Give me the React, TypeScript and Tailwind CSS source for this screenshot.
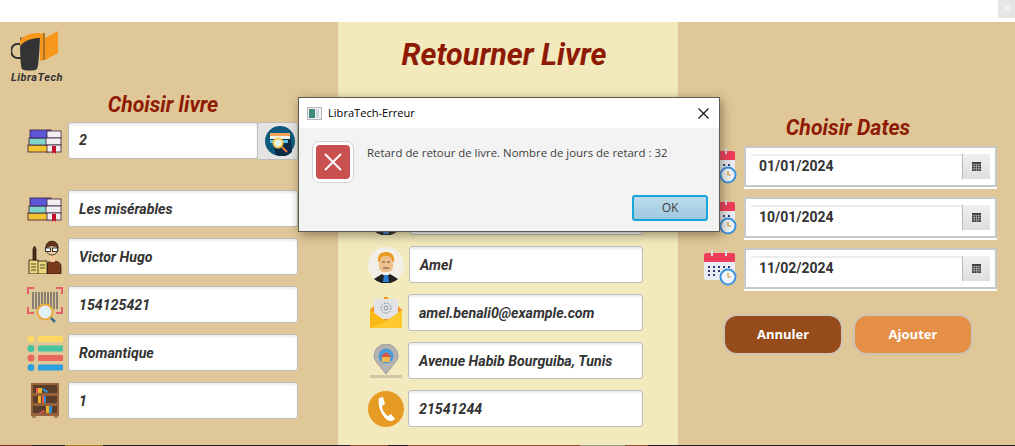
import { ReactNode } from "react";

const roboto = "font-['Roboto',sans-serif]";

const Books = () => (
  <svg viewBox="0 0 36 26" className="w-[36px] h-[26px]">
    <rect x="1" y="17" width="21" height="7" fill="#f4c430" stroke="#3b1d3f" strokeWidth="0.800" />
    <rect x="2" y="10" width="19" height="7" fill="#7fd6c8" stroke="#3b1d3f" strokeWidth="0.800" />
    <rect x="3" y="2" width="21" height="8" fill="#5b57d6" stroke="#3b1d3f" strokeWidth="0.800" />
    <rect x="20" y="3" width="14" height="7" fill="#f1eef0" stroke="#3b1d3f" strokeWidth="0.800" />
    <rect x="19" y="10" width="15" height="7" fill="#f1eef0" stroke="#3b1d3f" strokeWidth="0.800" />
    <rect x="20" y="17" width="14" height="7" fill="#f1eef0" stroke="#3b1d3f" strokeWidth="0.800" />
    <path d="M25 18h4v8l-2-2-2 2z" fill="#c8102e" />
  </svg>
);

const Author = () => (
  <svg viewBox="0 0 34 34" className="w-[34px] h-[34px]">
    <path d="M19 34v-9c0-3 3-4 6-4s8 1 8 5v8z" fill="#7a3a1c" stroke="#111" strokeWidth="0.700" />
    <path d="M22 16h5v6h-5z" fill="#f3c9a0" />
    <circle cx="24" cy="9" r="6" fill="#f3c9a0" stroke="#111" strokeWidth="0.700" />
    <path d="M18 8c-1-9 13-9 12 0-3-3-8-3-12 0z" fill="#6b3417" stroke="#111" strokeWidth="0.700" />
    <rect x="17.500" y="8" width="5" height="3.500" fill="#fff" stroke="#111" strokeWidth="0.800" />
    <rect x="24.500" y="8" width="5" height="3.500" fill="#fff" stroke="#111" strokeWidth="0.800" />
    <path d="M1 34V20h9v1h9v13z" fill="#ecd57a" stroke="#111" strokeWidth="0.800" />
    <path d="M10 21v13M3 24h5M3 27h5M3 30h5M12 25h5M12 28h5" stroke="#111" strokeWidth="0.700" />
    <path d="M5 20V9l1.500-3L8 9v11z" fill="#5b2a14" stroke="#111" strokeWidth="0.700" />
  </svg>
);

const Barcode = () => (
  <svg viewBox="0 0 36 36" className="w-[36px] h-[36px]">
    <path d="M1 7V1h6M29 1h6v6M1 20v6h6M29 26h6v-6" fill="none" stroke="#df6369" strokeWidth="2" />
    <path d="M6 5v17M9 5v17M12 5v17M15 5v17M18 5v17M21 5v17M24 5v17M27 5v17M30 5v17" stroke="#6c6a68" strokeWidth="1.500" />
    <circle cx="18" cy="25" r="7.500" fill="#e3f1f6" stroke="#e9a93c" strokeWidth="2" />
    <path d="M24 31l4 4" stroke="#3d6c93" strokeWidth="2.500" />
  </svg>
);

const Genres = () => (
  <svg viewBox="0 0 36 36" className="w-[36px] h-[36px]">
    {["#fdd761", "#47c39f", "#e8685a", "#2b9fe0"].map((c, i) => (
      <g key={c} fill={c}>
        <circle cx="4" cy={4 + i * 9.500} r="3.500" />
        <rect x="11" y={1 + i * 9.500} width="25" height="6" rx="1" />
      </g>
    ))}
  </svg>
);

const Shelf = () => (
  <svg viewBox="0 0 30 36" className="w-[30px] h-[36px]">
    <rect x="1" y="0" width="28" height="33" fill="#96623c" />
    <rect x="3" y="2" width="24" height="8" fill="#5b3d2a" />
    <rect x="3" y="13" width="24" height="7" fill="#5b3d2a" />
    <rect x="3" y="23" width="24" height="7" fill="#5b3d2a" />
    <path d="M6 5h2v5H6zM12 13h2v7h-2z" fill="#ef5b5b" />
    <path d="M8 5h4v5H8zM8 13h3v7H8zM16 23h3v7h-3z" fill="#f0b429" />
    <path d="M14 13h2v7h-2zM19 23h3v7h-3zM13 5l5 3-1 2-5-3z" fill="#2f8fd0" />
    <path d="M9 30l5-3 1 2-4 1z" fill="#ef5b5b" />
    <rect x="2" y="33" width="4" height="2" fill="#a7845a" />
    <rect x="24" y="33" width="4" height="2" fill="#a7845a" />
  </svg>
);

const Search = () => (
  <svg viewBox="0 0 30 30" className="w-[30px] h-[30px]">
    <circle cx="15" cy="15" r="15" fill="#0e5a7c" />
    <path d="M27 26A15 15 0 0 1 11 29L5 8h20z" fill="#0a2c47" />
    <rect x="5" y="7" width="20" height="3" fill="#f5a25d" />
    <rect x="5" y="10" width="20" height="3" fill="#f4f2ea" />
    <rect x="5" y="14" width="18" height="3" fill="#5cc4e6" />
    <circle cx="13" cy="17" r="4.500" fill="#e6f4f6" stroke="#f7c948" strokeWidth="2" />
    <path d="M17 21l5 5" stroke="#f27a3e" strokeWidth="2" />
  </svg>
);

const Person = () => (
  <svg viewBox="0 0 36 36" className="w-[36px] h-[36px]">
    <circle cx="18" cy="18" r="18" fill="#f3eee6" />
    <path d="M6 32l8-5 4 3 4-3 8 5a18 18 0 0 1-24 0z" fill="#222" />
    <path d="M16 28h4l1 7h-6z" fill="#2a7fd6" />
    <rect x="11" y="9" width="14" height="16" rx="5" fill="#eec08f" />
    <path d="M10 15c-1-8 4-10 8-10s9 2 8 10l-2-1c0-4-2-5-6-5s-6 1-6 5z" fill="#e89a1f" />
    <path d="M14 15h3M19 15h3M15 21h6" stroke="#6e4a2c" />
  </svg>
);

const Mail = () => (
  <svg viewBox="0 0 34 32" className="w-[34px] h-[32px]">
    <rect x="15" y="0" width="4" height="3" fill="#f7941d" />
    <path d="M1 13L5 9V3h24v6l4 4v18H1z" fill="#f7941d" />
    <rect x="5" y="2" width="24" height="20" rx="1" fill="#e2e3e6" />
    <circle cx="17" cy="11" r="5" fill="none" stroke="#8a929c" strokeDasharray="2 1" />
    <circle cx="17" cy="11" r="2" fill="none" stroke="#8a929c" />
    <path d="M1 13l16 11 16-11v18H1z" fill="#fdc92f" />
    <path d="M1 31V13l15 12z" fill="#fbb812" />
  </svg>
);

const Pin = () => (
  <svg viewBox="0 0 34 34" className="w-[34px] h-[34px]">
    <path d="M1 31h32v3H1z" fill="#cfc8a4" />
    <path d="M17 30C12 23 5 17 5 12a12 12 0 0 1 24 0c0 5-7 11-12 18z" fill="#b5b3b2" stroke="#a09e9c" />
    <circle cx="17" cy="12" r="7.500" fill="#4b9bd8" />
    <path d="M11 13l6-5 6 5z" fill="#d6564a" />
    <rect x="13" y="13" width="8" height="5" fill="#f0b94a" />
  </svg>
);

const Phone = () => (
  <svg viewBox="0 0 36 36" className="w-[36px] h-[36px]">
    <circle cx="18" cy="18" r="18" fill="#e69b24" />
    <path d="M11 7l4-1 2 7-3 2c0 4 3 8 6 10l3-2 4 5-3 2c-8 1-15-14-13-23z" fill="#fff" />
  </svg>
);

const Calendar = () => (
  <svg viewBox="0 0 34 36" className="w-[34px] h-[36px]">
    <rect x="1" y="3" width="31" height="27" rx="2" fill="#e9ecf4" />
    <path d="M1 12V5a2 2 0 0 1 2-2h27a2 2 0 0 1 2 2v7z" fill="#ef3d5a" />
    <rect x="8" y="0" width="2" height="6" fill="#d9dce6" />
    <rect x="22" y="0" width="2" height="6" fill="#d9dce6" />
    <path d="M5 16h2v2H5zM10 16h2v2h-2zM15 16h2v2h-2zM20 16h2v2h-2zM25 16h2v2h-2zM5 20h2v2H5zM10 20h2v2h-2zM15 20h2v2h-2zM5 24h2v2H5zM10 24h2v2h-2z" fill="#2e3f78" />
    <circle cx="25" cy="27" r="7.500" fill="#f2f5fa" stroke="#3d94e0" strokeWidth="2" />
    <path d="M25 23v4h3" fill="none" stroke="#c99a2e" strokeWidth="1.200" />
  </svg>
);

const Logo = () => (
  <svg viewBox="0 0 48 40" className="w-[48px] h-[40px]">
    <path d="M10 13H6a5 6 0 0 0 0 14h5" fill="none" stroke="#333" strokeWidth="2" />
    <path d="M9 7c0 6 0 28 2 31 2 2 13 2 15 0 2-4 3-30 3-35z" fill="#333" />
    <path d="M9 9c4-6 14-7 20-7v5C22 7 14 9 9 15z" fill="#f7981d" />
    <path d="M29 3l3-1v27l-3 1z" fill="#f7981d" />
    <path d="M32 2h2v27h-2z" fill="#a97524" />
    <path d="M34 29V7l13-7v22z" fill="#f7981d" />
  </svg>
);

const Field = ({ value, width = "w-full" }: { value: string; width?: string }) => (
  <div
    className={`${width} ${roboto} h-[37px] min-w-0 flex items-center pt-[2px] pl-[10px] bg-white rounded-[3px] border border-[#bdbdbd] shadow-[inset_0_2px_2px_#ededed] text-[14.200px] font-bold italic text-[#333333]`}
  >
    {value}
  </div>
);

const Row = ({ icon, children }: { icon: ReactNode; children: ReactNode }) => (
  <div className="flex items-center h-[37px]">
    <div className="w-[68px] shrink-0 flex justify-center pl-[22px]">{icon}</div>
    <div className="flex-1 min-w-0 flex">{children}</div>
  </div>
);

const DateField = ({ value }: { value: string }) => (
  <div className="flex items-center h-[41px] pr-[18px]">
    <div className="flex-1 flex justify-end pr-[7px] mt-[-2px]">
      <Calendar />
    </div>
    <div className="w-[253px] h-[41px] shrink-0 bg-white border-2 border-[#c8c8c8] shadow-[0_2px_0_#ffffff] flex items-center px-[5px]">
      <div className={`${roboto} flex-1 h-[25px] flex items-center pl-[8px] shadow-[inset_0_2px_1px_#ececec] text-[14px] font-bold text-[#333333]`}>
        {value}
      </div>
      <div className="w-[28px] h-[25px] border-l border-[#b9b9b9] bg-gradient-to-b from-[#f0f0f0] to-[#dedede] flex items-center justify-center">
        <svg viewBox="0 0 10 10" className="w-[9px] h-[9px]">
          <rect width="10" height="10" fill="#3a3a3a" />
          <path d="M0 2.500h10M0 5h10M0 7.500h10M2.500 2v8M5 2v8M7.500 2v8" stroke="#cfcfcf" strokeWidth="0.600" />
        </svg>
      </div>
    </div>
  </div>
);

const ErrorDialog = () => (
  <div className="absolute left-[298px] top-[97px] w-[422px] h-[135px] border border-[#5f5a4e] bg-[#f3f3f3] shadow-[2px_3px_10px_rgba(60,50,30,0.5)] font-['Open_Sans',sans-serif] text-[#3d3d3d]">
    <div className="h-[30px] bg-white flex items-center pl-[8px] pr-[8px]">
      <svg viewBox="0 0 15 13" className="w-[15px] h-[13px] mr-[6px]">
        <rect x="0.500" y="0.500" width="14" height="12" fill="#eef0f2" stroke="#b5b8bb" />
        <rect x="2" y="2" width="6" height="9" fill="#3f8a7c" />
        <rect x="9" y="2" width="3" height="9" fill="#cfd6dc" />
      </svg>
      <span className="text-[11.100px] text-black">LibraTech-Erreur</span>
      <svg viewBox="0 0 11 11" className="w-[11px] h-[11px] ml-auto mr-[2px]" stroke="#111" strokeWidth="1.100">
        <path d="M0.500 0.500l10 10M10.500 0.500l-10 10" />
      </svg>
    </div>
    <div className="flex pl-[13px] pt-[13px]">
      <div className="w-[42px] h-[42px] rounded-[7px] bg-white border border-[#d2d2d2] flex items-center justify-center">
        <div className="w-[34px] h-[34px] rounded-[4px] bg-[#c9504f] flex items-center justify-center">
          <svg viewBox="0 0 18 18" className="w-[18px] h-[18px]" stroke="#fff" strokeWidth="2">
            <path d="M1 1l16 16M17 1L1 17" />
          </svg>
        </div>
      </div>
      <p className="ml-[13px] mt-[4px] text-[11.400px] leading-[16px]">
        Retard de retour de livre. Nombre de jours de retard : 32
      </p>
    </div>
    <div className="flex justify-end pr-[11px] mt-[12px]">
      <div className="w-[76px] h-[26px] rounded-[3px] border-2 border-[#1aa5d8] bg-gradient-to-b from-[#bcdcec] to-[#9fc8de] text-[12px] flex items-center justify-center">
        OK
      </div>
    </div>
  </div>
);

export default function App() {
  return (
    <div className="relative w-[1015px] h-[446px] overflow-hidden bg-white">
      <div className="h-[22px] flex justify-end">
        <div className="w-[17px] h-[18px] bg-[#e6e6e6] flex items-center justify-center text-[10px] leading-none font-bold text-[#f5f5f5] font-['Liberation_Sans',sans-serif]">
          ✕
        </div>
      </div>

      <div className="h-[423px] flex bg-[#e0c797]">
        {/* colonne livre */}
        <div className="w-[338px] pr-[40px] flex flex-col">
          <div className="h-[60px] pl-[11px] pt-[9px]">
            <Logo />
            <div className={`${roboto} mt-[1px] text-[11px] leading-[11px] font-bold italic tracking-[0.5px] text-[#333333]`}>LibraTech</div>
          </div>
          <h2 className={`${roboto} mt-[10px] pl-[28px] text-center text-[21.200px] leading-[26px] font-bold italic text-[#8e1a04]`}>
            Choisir livre
          </h2>
          <div className="flex flex-col mt-[4px]">
            <Row icon={<Books />}>
              <div className="flex">
                <Field value="2" width="w-[190px]" />
                <div className="ml-[-1px] w-[41px] h-[38px] shrink-0 rounded-[3px] border border-[#bdbdbd] bg-[#e4e4e4] flex items-center pl-[7px]">
                  <Search />
                </div>
              </div>
            </Row>
            <div className="h-[31px]" />
            <div className="flex flex-col gap-[11px]">
              <Row icon={<Books />}>
                <Field value="Les misérables" />
              </Row>
              <Row icon={<Author />}>
                <Field value="Victor Hugo" />
              </Row>
              <Row icon={<Barcode />}>
                <Field value="154125421" />
              </Row>
              <Row icon={<Genres />}>
                <Field value="Romantique" />
              </Row>
              <Row icon={<Shelf />}>
                <Field value="1" />
              </Row>
            </div>
          </div>
        </div>

        {/* colonne adherent */}
        <div className="w-[340px] bg-[#f2eabc] pl-[30px] pr-[35px] flex flex-col">
          <h1 className={`${roboto} mt-[14px] mr-[3px] text-center text-[30.500px] leading-[38px] font-bold italic text-[#8e1a04]`}>
            Retourner Livre
          </h1>
          <div className="mt-[124px] flex flex-col gap-[11px]">
            <div className="flex items-center gap-[6px] h-[37px]">
              <div className="w-[36px] shrink-0"><Person /></div>
              <Field value="" />
            </div>
            <div className="flex items-center gap-[5px] h-[37px]">
              <div className="w-[36px] shrink-0"><Person /></div>
              <Field value="Amel" />
            </div>
            <div className="flex items-center gap-[4px] h-[37px]">
              <div className="w-[36px] shrink-0 flex justify-center"><Mail /></div>
              <Field value="amel.benali0@example.com" />
            </div>
            <div className="flex items-center gap-[4px] h-[37px]">
              <div className="w-[36px] shrink-0 flex justify-center"><Pin /></div>
              <Field value="Avenue Habib Bourguiba, Tunis" />
            </div>
            <div className="flex items-center gap-[4px] h-[37px]">
              <div className="w-[36px] shrink-0"><Phone /></div>
              <Field value="21541244" />
            </div>
          </div>
        </div>

        {/* colonne dates */}
        <div className="flex-1 flex flex-col">
          <h2 className={`${roboto} mt-[93px] pl-[3px] text-center text-[21.300px] leading-[26px] font-bold italic text-[#8e1a04]`}>
            Choisir Dates
          </h2>
          <div className="mt-[5px] flex flex-col gap-[10px]">
            <DateField value="01/01/2024" />
            <DateField value="10/01/2024" />
            <DateField value="11/02/2024" />
          </div>
          <div className="mt-[25px] pl-[45px] flex gap-[10px]">
            <button className="w-[120px] h-[41px] rounded-[14px] border-2 border-[#cfc4b4] bg-[#964b1a] text-white text-[13px] font-bold font-['Open_Sans',sans-serif]">
              Annuler
            </button>
            <button className="w-[120px] h-[41px] rounded-[14px] border-2 border-[#cfc4b4] bg-[#e58e46] text-white text-[13px] font-bold font-['Open_Sans',sans-serif]">
              Ajouter
            </button>
          </div>
        </div>
      </div>

      {/* bout de la barre des taches visible en bas */}
      <div className="h-[1px] flex bg-[#2a1a2e]">
        <div className="w-[32px] bg-[#7a2a2a]" />
        <div className="w-[33px]" />
        <div className="w-[38px] bg-[#a8791f]" />
        <div className="w-[247px]" />
        <div className="w-[38px] bg-[#8a4f32]" />
        <div className="w-[20px]" />
        <div className="w-[172px] bg-[#8a4f32]" />
        <div className="w-[45px] bg-[#9a9a7a]" />
        <div className="w-[23px] bg-[#8a4f32]" />
      </div>
      <ErrorDialog />
    </div>
  );
}
